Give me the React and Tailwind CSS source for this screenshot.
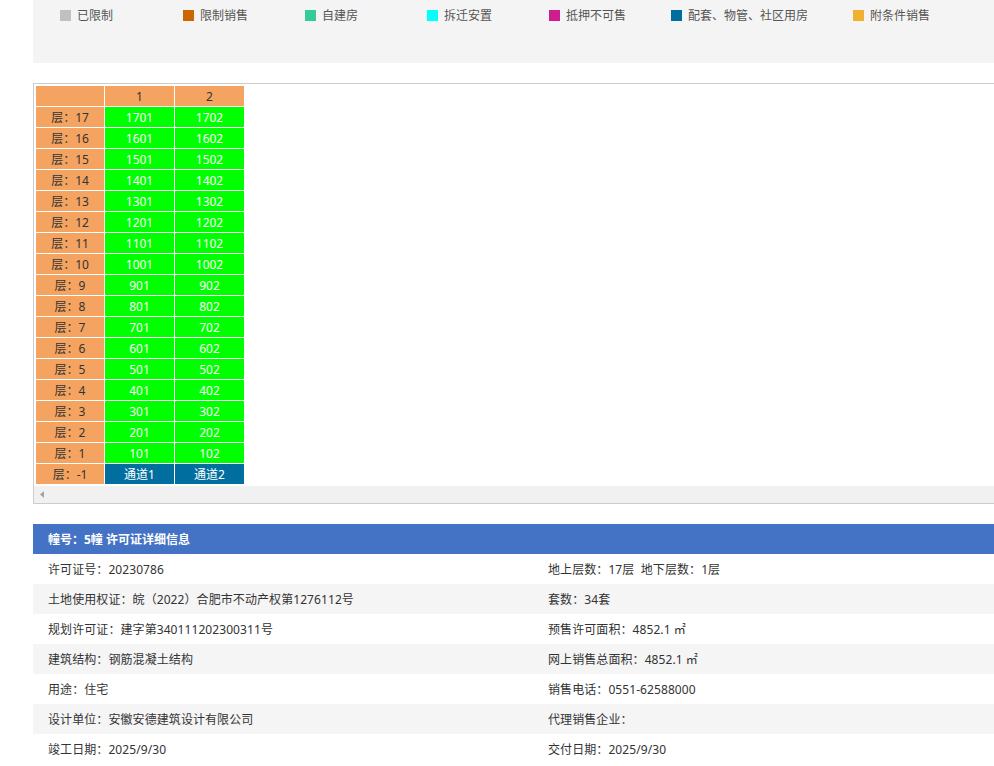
const legend = [
  ["已限制", "bg-[#c0c0c0]", "w-[123px]"],
  ["限制销售", "bg-[#cc6600]", "w-[122px]"],
  ["自建房", "bg-[#33cc99]", "w-[122px]"],
  ["拆迁安置", "bg-[#00ffff]", "w-[122px]"],
  ["抵押不可售", "bg-[#cc1e8c]", "w-[122px]"],
  ["配套、物管、社区用房", "bg-[#006f9f]", "w-[182px]"],
  ["附条件销售", "bg-[#f0b030]", "w-[120px]"],
];
const floors = [17, 16, 15, 14, 13, 12, 11, 10, 9, 8, 7, 6, 5, 4, 3, 2, 1];
const info = [
  ["许可证号：20230786", "地上层数：17层  地下层数：1层"],
  ["土地使用权证：皖（2022）合肥市不动产权第1276112号", "套数：34套"],
  ["规划许可证：建字第340111202300311号", "预售许可面积：4852.1 ㎡"],
  ["建筑结构：钢筋混凝土结构", "网上销售总面积：4852.1 ㎡"],
  ["用途：住宅", "销售电话：0551-62588000"],
  ["设计单位：安徽安德建筑设计有限公司", "代理销售企业："],
  ["竣工日期：2025/9/30", "交付日期：2025/9/30"],
];
const font = "font-['Noto_Sans','Noto_Sans_CJK_SC',sans-serif]";
const Cell = ({ children, className }) => (
  <td className={`h-5 p-0 pt-px text-center text-[12px] leading-[19px] ${className}`}>{children}</td>
);

export default function App() {
  return (
    <div className={`h-[766px] w-[994px] overflow-hidden bg-white pl-[33px] text-[12px] text-[#333] ${font}`}>
      <div className="w-[1100px]">
        <div className="flex h-[63px] items-start bg-[#f4f4f4] pl-[27px] pt-[9px]">
          {legend.map(([label, color, w]) => (
            <div key={label} className={`flex h-[12px] items-center ${w}`}>
              <span className={`mr-[6px] h-[11px] w-[11px] shrink-0 ${color}`} />
              <span className="whitespace-nowrap pt-[2px] leading-[14px] text-[#555]">{label}</span>
            </div>
          ))}
        </div>
        <div className="mt-5 flex h-[421px] flex-col border border-[#ccc] pl-[1px] pt-[1px]">
          <div className="flex-1">
            <table className="border-separate border-spacing-[1px] text-[#333]">
              <tbody>
                <tr>
                  <Cell className="w-[68px] bg-[#f4a460]"></Cell>
                  <Cell className="w-[69px] bg-[#f4a460]">1</Cell>
                  <Cell className="w-[69px] bg-[#f4a460]">2</Cell>
                </tr>
                {floors.map((f) => (
                  <tr key={f}>
                    <Cell className="bg-[#f4a460]">层：{f}</Cell>
                    <Cell className="bg-[#00ff00] text-white">{f}01</Cell>
                    <Cell className="bg-[#00ff00] text-white">{f}02</Cell>
                  </tr>
                ))}
                <tr>
                  <Cell className="bg-[#f4a460]">层：-1</Cell>
                  <Cell className="bg-[#006f9f] text-white">通道1</Cell>
                  <Cell className="bg-[#006f9f] text-white">通道2</Cell>
                </tr>
              </tbody>
            </table>
          </div>
          <div className="-ml-[1px] flex h-[17px] items-center bg-[#f1f1f1] pl-[6px]">
            <svg width="4" height="7" viewBox="0 0 4 7" aria-hidden="true">
              <path d="M4 0V7L0 3.5Z" fill="#a3a3a3" />
            </svg>
          </div>
        </div>
        <div className="mt-5 flex h-[30px] items-center bg-[#4472c4] pl-[15px] pt-px font-bold text-white">
          幢号：5幢 许可证详细信息
        </div>
        {info.map(([a, b], i) => (
          <div key={a} className={`flex h-[30px] items-center pl-[15px] pt-px tracking-[0.08px] ${i % 2 ? "bg-[#f5f5f5]" : "bg-white"}`}>
            <div className="w-[500px] whitespace-nowrap">{a}</div>
            <div className="whitespace-pre">{b}</div>
          </div>
        ))}
      </div>
    </div>
  );
}
